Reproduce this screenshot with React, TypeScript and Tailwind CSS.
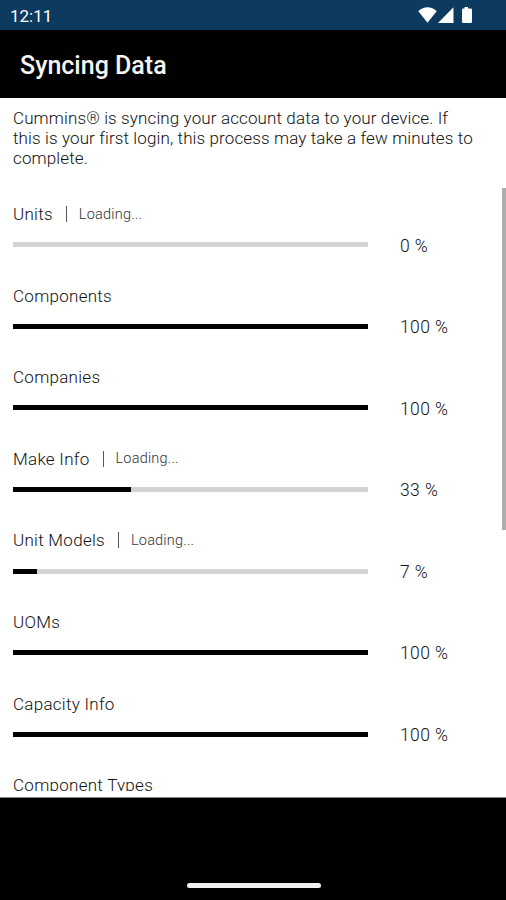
import React from 'react';

// type of one row in the sync list
type TSyncItem = {
    title: string;
    done?: number;
    total?: number;
    loading?: boolean;
}

const syncItems: TSyncItem[] = [
    { title: 'Units', done: 0, total: 1, loading: true },
    { title: 'Components', done: 1, total: 1 },
    { title: 'Companies', done: 1, total: 1 },
    { title: 'Make Info', done: 1, total: 3, loading: true },
    { title: 'Unit Models', done: 1, total: 15, loading: true },
    { title: 'UOMs', done: 1, total: 1 },
    { title: 'Capacity Info', done: 1, total: 1 },
    { title: 'Component Types' },
];

const StatusBar = () => (
    <div className="flex h-[30px] shrink-0 items-center justify-between bg-[#0d3a5f] pl-[10px] pr-[32px] text-white">
        <span className="mt-[2px] text-[17px] font-normal leading-5">12:11</span>
        <svg className="h-[17px] w-[56px]" viewBox="0 0 56 17" fill="currentColor">
            {/* wifi */}
            <path d="M0.3 4.2C5.5 -1 13.500 -1 18.700 4.200L9.500 15.700Z" />
            {/* signal */}
            <path d="M35.500 0.300V16H20Z" />
            {/* battery */}
            <path d="M46.500 0h3.500v1.600h2.700q1.300 0 1.300 1.300v11.800q0 1.300 -1.300 1.300h-7.400q-1.300 0 -1.300 -1.300v-11.800q0 -1.300 1.300 -1.300h1.200z" />
        </svg>
    </div>
);

const SyncRow = ({ title, done, total = 1, loading }: TSyncItem) => {
    return (
        <div className="h-[81.6px] shrink-0 pl-[13px] pt-4">
            <div className="flex h-5 items-center text-[17px] leading-5 tracking-[0.28px]">
                <span>{title}</span>
                {loading && (
                    <React.Fragment>
                        <div className="ml-[13px] mr-[12px] h-4 w-px bg-[#555]"></div>
                        <span className="mt-px text-[14.5px] tracking-[0.2px] text-[#333]">Loading...</span>
                    </React.Fragment>
                )}
            </div>
            {done !== undefined && (
                <div className="mt-3 flex h-5 items-center">
                    <div className="mb-[2.600px] h-[5px] w-[355px] bg-[#d3d3d3]">
                        <div className="h-full bg-black" style={{ width: `${(done / total) * 100}%` }}></div>
                    </div>
                    <span className="mb-px ml-8 text-[17.5px] leading-5 tracking-[0.4px]">{Math.round((done / total) * 100)} %</span>
                </div>
            )}
        </div>
    );
};

const App = () => {
    return (
        <div className="flex h-[900px] w-[506px] flex-col overflow-hidden bg-white font-['Roboto',sans-serif] font-light text-[#111]">
            <StatusBar />
            <header className="flex h-[68px] shrink-0 items-center bg-black pl-5">
                <h1 className="mt-1 text-[25px] font-medium leading-8 text-[#f5f5f5]">Syncing Data</h1>
            </header>
            <p className="h-[90px] shrink-0 whitespace-nowrap pl-[13px] pt-[10px] text-[17px] leading-5 tracking-[0.12px]">
                Cummins® is syncing your account data to your device. If<br />
                this is your first login, this process may take a few minutes to<br />
                complete.
            </p>
            <main className="flex h-[603px] shrink-0 justify-between">
                <div className="flex flex-1 flex-col overflow-hidden">
                    {syncItems.map((item) => (
                        <SyncRow key={item.title} {...item} />
                    ))}
                </div>
                {/* scroll thumb */}
                <div className="h-[342px] w-1 bg-[#adadad]"></div>
            </main>
            <footer className="mt-[6px] flex flex-1 items-end justify-center border-t border-[#808080] bg-black pb-[12px]">
                <div className="ml-px h-[5px] w-[134px] rounded-full bg-[#f1f1f1]"></div>
            </footer>
        </div>
    );
};

export default App;
